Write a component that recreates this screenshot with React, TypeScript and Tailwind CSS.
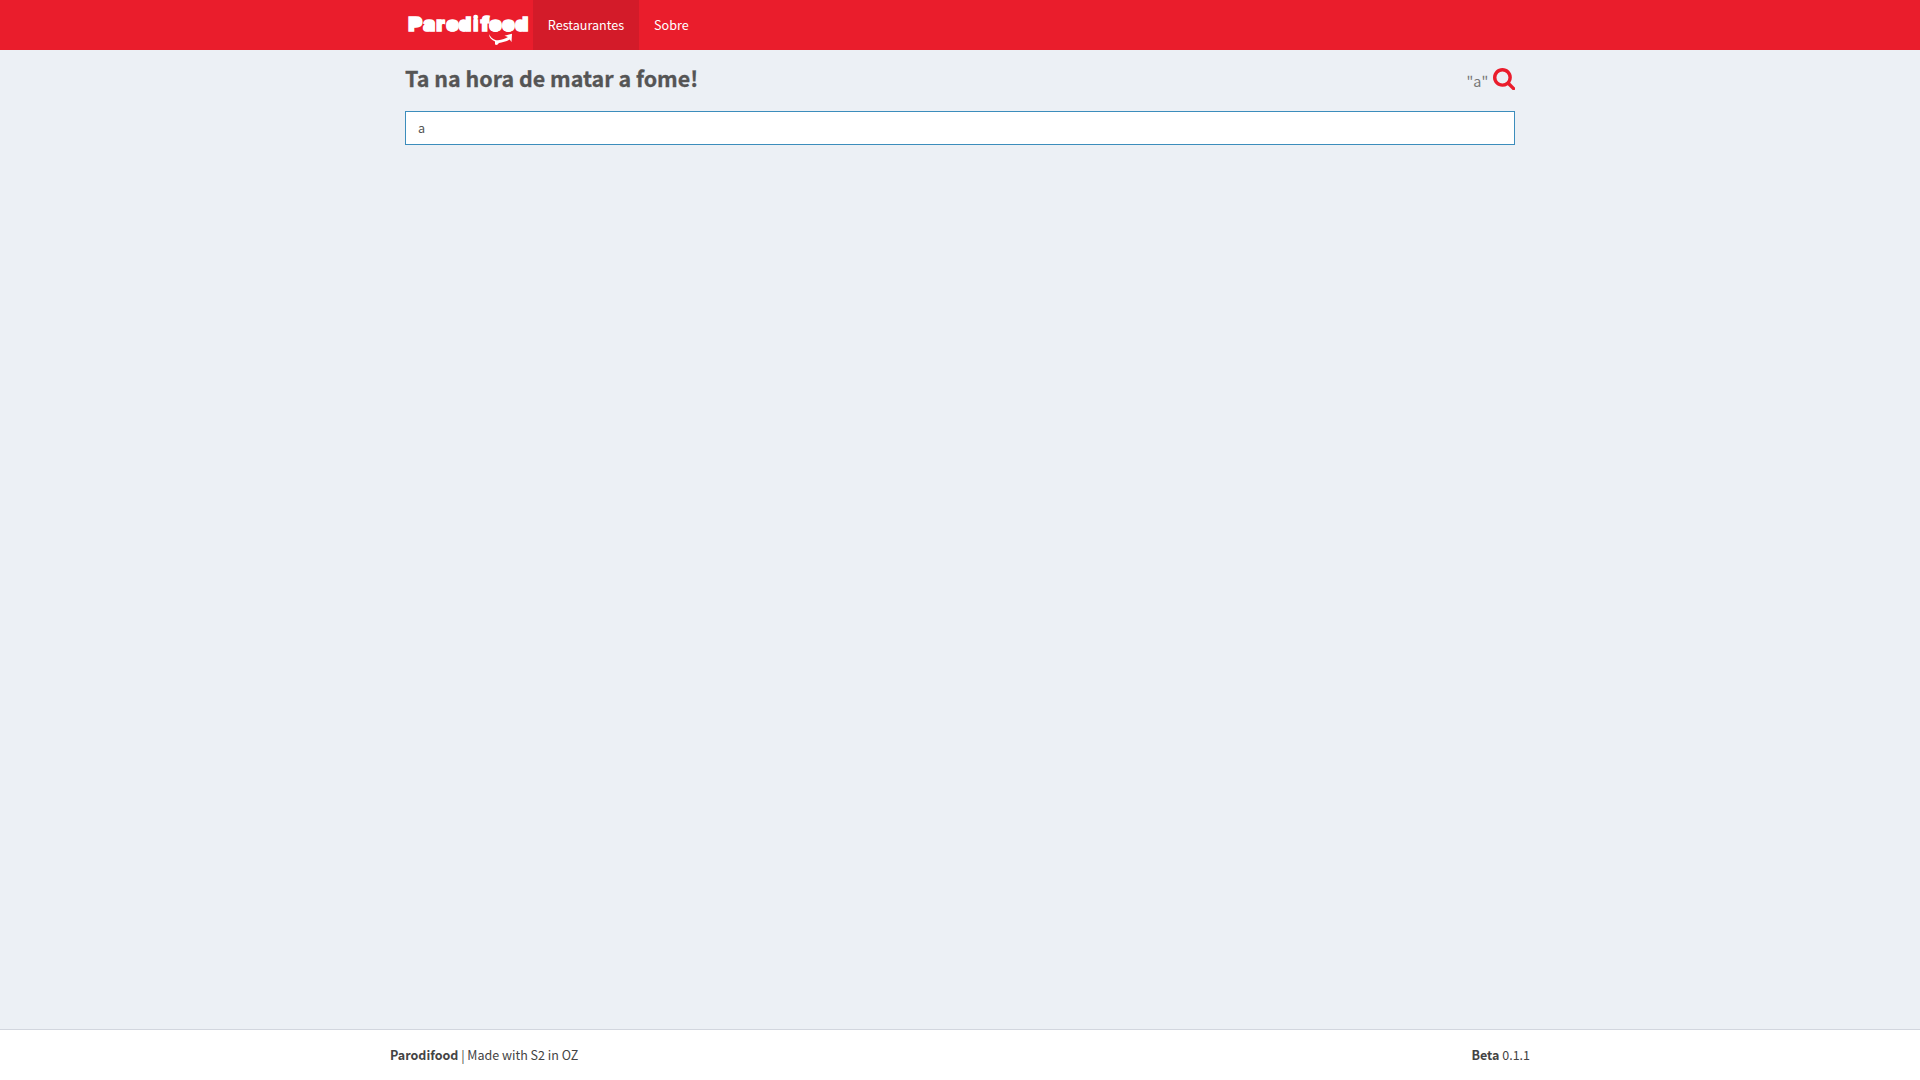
import React from "react";

// Each entry: character, left edge, drawn width
const letters: [string, number, number][] = [
  ["P", 408, 14.5],
  ["a", 423, 12.5],
  ["r", 436, 9],
  ["o", 446, 13],
  ["d", 458.5, 13],
  ["i", 473, 5.5],
  ["f", 480.5, 9],
  ["o", 489, 13],
  ["o", 502, 13],
  ["d", 515, 13.5],
];

// Solid bowls: centre and radius
const bowls: [number, number, number][] = [
  [416, 21.5, 4],
  [429, 26.5, 5],
  [452.3, 26, 5.5],
  [464.5, 26, 5.5],
  [495.3, 26, 6],
  [508.3, 26, 6],
  [521, 26, 5.5],
];

function Logo() {
  return (
    <svg width="128" height="50" viewBox="405 0 128 50" fill="#fff" className="block" aria-label="Parodifood">
      <g
        fontFamily="Inter, sans-serif"
        fontWeight="900"
        fontSize="19"
        stroke="#fff"
        strokeWidth="1.5"
        strokeLinejoin="miter"
      >
        {letters.map(([c, x, w], i) => (
          <text key={i} x={x + 0.25} y="31.2" textLength={w - 0.5} lengthAdjust="spacingAndGlyphs">
            {c}
          </text>
        ))}
      </g>
      {bowls.map(([cx, cy, r], i) => (
        <circle key={i} cx={cx} cy={cy} r={r} />
      ))}
      <path d="M489 34 C491 38 494 40.5 498 40.3 C502 40 506 38.5 508 37 L504.5 35.7 L512 33.8 L511.5 42 L509.7 39.5 C506 42 502 42 499 43 L497 45 L495 44.5 L495 41.5 C491 40 489 37 489 34Z" />
    </svg>
  );
}

function SearchIcon() {
  return (
    <svg viewBox="64 128 1664 1664" className="mt-px size-[22.3px] fill-[#ea1d2c]">
      <path d="M1216 832q0-185-131.5-316.5t-316.5-131.5-316.5 131.5-131.5 316.5 131.5 316.5 316.5 131.5 316.5-131.5 131.5-316.5zm512 832q0 52-38 90t-90 38q-54 0-90-38l-343-342q-179 124-399 124-143 0-273.5-55.5t-225-150-150-225-55.5-273.5 55.5-273.5 150-225 225-150 273.5-55.5 273.5 55.5 225 150 150 225 55.5 273.5q0 220-124 399l343 343q37 37 37 90z" />
    </svg>
  );
}

export default function App() {
  return (
    <div className="flex h-screen flex-col bg-[#ecf0f5] font-['Noto_Sans_CJK_SC',sans-serif] text-[12.6px] leading-5 text-[#444]">
      <header className="h-[50px] bg-[#ea1d2c] text-white">
        <nav className="mx-auto flex h-full w-[1110px]">
          <Logo />
          <a className="flex w-[106px] items-center justify-center bg-[#d31b29]">Restaurantes</a>
          <a className="flex items-center px-[15px]">Sobre</a>
        </nav>
      </header>
      <main className="mx-auto w-[1110px] flex-1">
        <div className="flex h-[61px] justify-between">
          <h1 className="mt-[15px] text-[21.45px] leading-[26px] font-bold text-[#555] [-webkit-text-stroke:0.3px_#555]">
            Ta na hora de matar a fome!
          </h1>
          <div className="mt-[17px] flex">
            <span className="mt-[4px] mr-[4.5px] text-[14.4px] leading-5 text-[#777]">"a"</span>
            <SearchIcon />
          </div>
        </div>
        <div className="flex h-[34px] items-center border border-[#3c8dbc] bg-white px-3 text-[#555]">a</div>
      </main>
      <footer className="h-[51px] border-t border-[#d2d6de] bg-white">
        <div className="mx-auto flex w-[1140px] justify-between pt-[15px] text-[12.5px]">
          <span>
            <b>Parodifood</b> | Made with S2 in OZ
          </span>
          <span>
            <b>Beta</b> 0.1.1
          </span>
        </div>
      </footer>
    </div>
  );
}
